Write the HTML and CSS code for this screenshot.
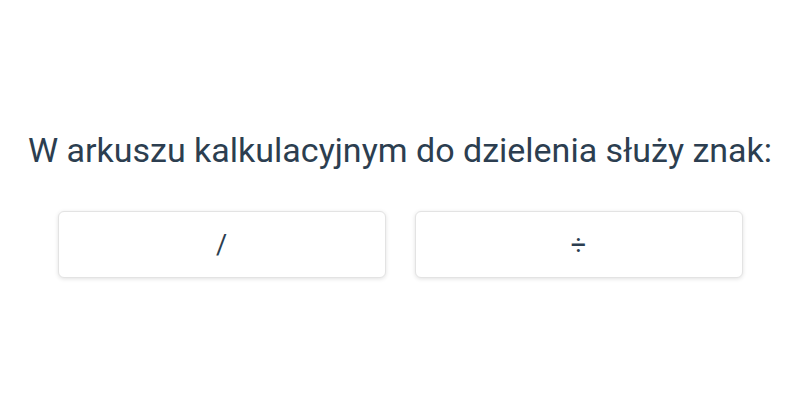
FILE: index.html
```html
<!DOCTYPE html>
<html lang="pl">
<head>
<meta charset="utf-8">
<link rel="stylesheet" href="styles.css">
</head>
<body>
<main class="quiz">
  <h1 class="question">W arkuszu kalkulacyjnym do dzielenia służy znak:</h1>
  <div class="answers">
    <button class="answer">/</button>
    <button class="answer">÷</button>
  </div>
</main>
</body>
</html>
```

FILE: styles.css
```css
html, body {
  margin: 0;
  padding: 0;
  background: #ffffff;
}
body {
  font-family: Roboto, "Noto Sans", sans-serif;
  color: #2c3e50;
  width: 800px;
  height: 400px;
}
.quiz {
  display: flex;
  flex-direction: column;
  align-items: center;
  padding-top: 127px;
}
.question {
  margin: 0;
  font-size: 34px;
  font-weight: 400;
  line-height: 46px;
  white-space: nowrap;
}
.answers {
  display: grid;
  grid-template-columns: 328px 328px;
  gap: 29px;
  margin-top: 38px;
}
.answer {
  height: 67px;
  background: #ffffff;
  border: 1px solid #e3e3e3;
  border-radius: 6px;
  box-shadow: 0 1px 4px rgba(0, 0, 0, 0.12);
  font-family: Roboto, "Noto Sans", sans-serif;
  font-size: 27px;
  color: #2c3e50;
  padding: 0;
}
```
